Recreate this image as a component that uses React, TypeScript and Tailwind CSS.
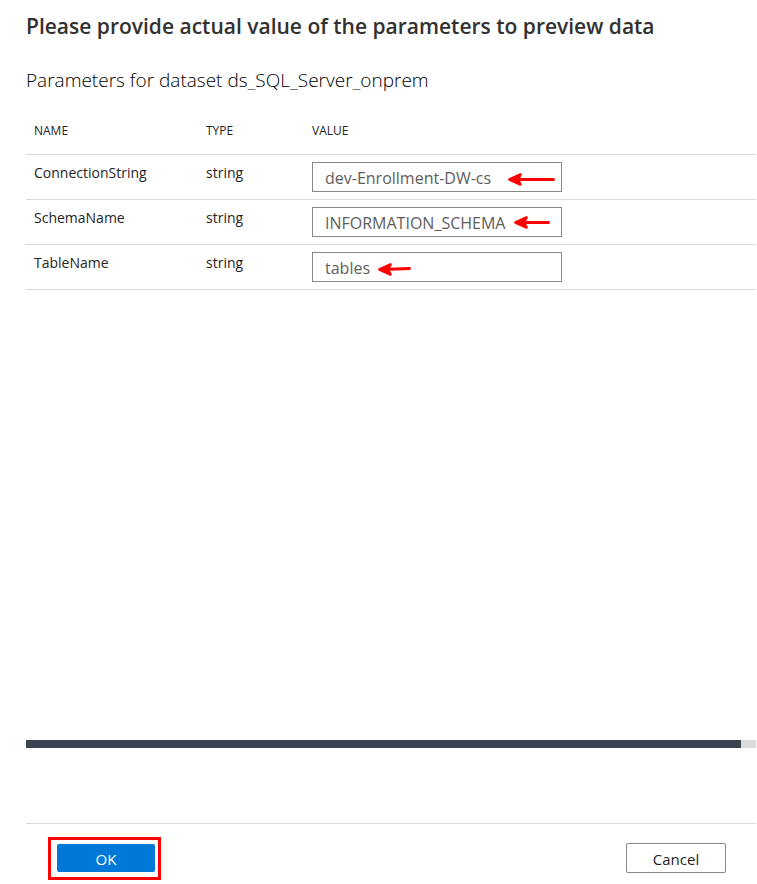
import { useState } from "react";

type Parameter = {
  name: string;
  type: string;
  value: string;
  arrow: { className: string; width: number; tilt: number };
};

const parameters: Parameter[] = [
  {
    name: "ConnectionString",
    type: "string",
    value: "dev-Enrollment-DW-cs",
    arrow: { className: "left-[196px] top-[11px]", width: 47, tilt: 0 },
  },
  {
    name: "SchemaName",
    type: "string",
    value: "INFORMATION_SCHEMA",
    arrow: { className: "left-[202px] top-[9px]", width: 36, tilt: 0 },
  },
  {
    name: "TableName",
    type: "string",
    value: "tables",
    arrow: { className: "left-[66px] top-[11px]", width: 33, tilt: -1 },
  },
];

function Arrow({ className, width, tilt }: Parameter["arrow"]) {
  return (
    <svg
      className={`pointer-events-none absolute ${className}`}
      width={width}
      height="14"
      viewBox={`0 0 ${width} 14`}
      fill="none"
      stroke="#ff0000"
      strokeLinecap="round"
      strokeLinejoin="round"
      aria-hidden="true"
    >
      <path d={`M5 6.5 L${width - 1.5} ${6.5 + tilt}`} strokeWidth="3" />
      <path
        d="M12.5 1.5 L1.5 6.5 L12.5 11.5 L10 6.5 Z"
        fill="#ff0000"
        strokeWidth="2.6"
      />
    </svg>
  );
}

function ParameterRow({ parameter }: { parameter: Parameter }) {
  const [value, setValue] = useState(parameter.value);
  const id = `value-${parameter.name}`;
  return (
    <tr className="h-[45px] border-b border-[#d9d9d9] align-top">
      <td className="px-2 pt-2">
        <label htmlFor={id}>{parameter.name}</label>
      </td>
      <td className="px-2 pt-2">{parameter.type}</td>
      <td className="px-2 pt-[7px]">
        <div className="relative w-[250px]">
          <input
            id={id}
            type="text"
            value={value}
            onChange={(event) => setValue(event.target.value)}
            className="block h-[30px] w-full border border-[#8a8886] bg-white px-3 pt-0.5 text-[16px] text-[#605e5c] outline-none"
          />
          <Arrow {...parameter.arrow} />
        </div>
      </td>
    </tr>
  );
}

export default function App() {
  return (
    <main className="flex min-h-screen flex-col bg-white pr-px pl-[26px] font-['Open_Sans','Noto_Sans',sans-serif] text-[#252423]">
      <h1 className="pt-2.5 text-[21px] leading-8 font-semibold text-[#323130]">
        Please provide actual value of the parameters to preview data
      </h1>
      <h2 className="mt-6 text-[19px] leading-7 font-light text-black">
        Parameters for dataset ds_SQL_Server_onprem
      </h2>
      <div className="mt-3 flex-1">
        <table className="w-full table-fixed border-collapse text-left text-[14px] leading-5">
          <thead>
            <tr className="h-12 border-b border-[#d9d9d9] text-[12px]">
              <th className="w-[172px] px-2 pt-0.5 font-normal">NAME</th>
              <th className="w-[106px] px-2 pt-0.5 font-normal">TYPE</th>
              <th className="px-2 pt-0.5 font-normal">VALUE</th>
            </tr>
          </thead>
          <tbody>
            {parameters.map((parameter) => (
              <ParameterRow key={parameter.name} parameter={parameter} />
            ))}
          </tbody>
        </table>
      </div>
      <div className="h-2 bg-[#dcdcdc]">
        <div className="h-full w-[98%] bg-[#3b444f]" />
      </div>
      <footer className="mt-[75px] flex items-start justify-between border-t border-[#d9d9d9] pt-[13px] pr-[30px] pb-1 pl-[22px] text-[15px]">
        <div className="border-3 border-[#ff0000] pt-1 pr-[3px] pb-[5px] pl-1.5">
          <button
            type="button"
            className="block h-7 w-[98px] rounded-xs bg-[#0078d7] pt-0.5 text-white"
          >
            OK
          </button>
        </div>
        <button
          type="button"
          className="mt-1.5 h-[30px] w-[100px] rounded-xs border border-[#8a8886] bg-white pt-0.5"
        >
          Cancel
        </button>
      </footer>
    </main>
  );
}
